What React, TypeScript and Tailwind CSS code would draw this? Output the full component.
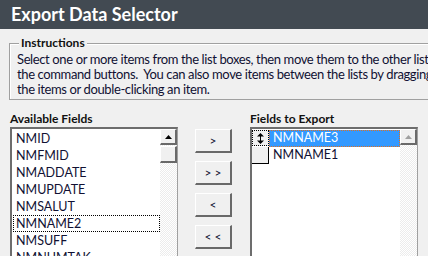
import React from "react";

const leftItems = ["NMID", "NMFMID", "NMADDATE", "NMUPDATE", "NMSALUT", "NMNAME2", "NMSUFF", "NMNUMTAK"];

const ui = { fontFamily: "Lato, 'Liberation Sans', sans-serif" };
const checker = "bg-[repeating-conic-gradient(#ffffff_0_25%,#ececec_0_50%)] bg-[length:2px_2px]";

const Arrow = ({ disabled }: { disabled?: boolean }) => (
  <svg width="7" height="4" viewBox="0 0 7 4">
    <path d="M3.5 0 L7 4 L0 4 Z" fill={disabled ? "#a0a0a0" : "#000"} />
  </svg>
);

const Raised = ({ className = "", children }: { className?: string; children?: React.ReactNode }) => (
  <div className={`flex items-center justify-center bg-[#f0f0f0] border-t border-l border-t-white border-l-white border-r-2 border-b-2 border-r-[#696969] border-b-[#696969] ${className}`}>
    {children}
  </div>
);

const MoveButton = ({ label }: { label: string }) => (
  <Raised className="w-[37px] h-[24px] text-[12px] text-[#111133]">
    <span style={ui}>{label}</span>
  </Raised>
);

export default function App() {
  return (
    <div className="w-[428px] h-[256px] overflow-hidden bg-[#f0f0f0] flex flex-col" style={ui}>
      <div className="h-[29px] shrink-0 bg-[#424a52] pl-[11px] text-white font-bold text-[18px] leading-[29px]">
        Export Data Selector
      </div>

      <div className="relative mt-[14px] ml-[9px] w-[440px] h-[57px] shrink-0 border border-[#a0a0a0] shadow-[inset_1px_1px_0_#fff]">
        <span className="absolute -top-[9px] left-[9px] px-[2px] bg-[#f0f0f0] font-bold text-[12px] leading-[16px] text-[#111]">
          Instructions
        </span>
        <div className="pt-[8px] pl-[7px] text-[13px] tracking-[-0.38px] leading-[15px] text-[#111133] whitespace-nowrap">
          <div>Select one or more items from the list boxes, then move them to the other list</div>
          <div>the command buttons.&nbsp; You can also move items between the lists by dragging</div>
          <div>the items or double-clicking an item.</div>
        </div>
      </div>

      <div className="flex mt-[11px] pl-[10px]">
        <div className="flex flex-col w-[168px]">
          <div className="font-bold text-[12px] leading-[15px] text-[#111] h-[16px]">Available Fields</div>
          <div className="flex h-[140px] bg-white border-t-2 border-l-2 border-[#6d6d6d] border-r border-r-[#a0a0a0]">
            <div className="flex-1 pt-[1px]">
              {leftItems.map((it) => (
                <div
                  key={it}
                  className={`h-[17px] pl-[2px] ml-[1px] text-[12.5px] leading-[15px] text-[#111133] border ${
                    it === "NMNAME2" ? "border-dotted border-black" : "border-transparent"
                  }`}
                >
                  {it}
                </div>
              ))}
            </div>
            <div className={`w-[17px] flex flex-col ${checker}`}>
              <Raised className="h-[16px]">
                <Arrow />
              </Raised>
              <Raised className="h-[17px] mt-[1px]" />
            </div>
          </div>
        </div>

        <div className="flex flex-col gap-[8px] ml-[17px] mt-[18px]">
          <MoveButton label=">" />
          <MoveButton label="> >" />
          <MoveButton label="<" />
          <MoveButton label="< <" />
        </div>

        <div className="flex flex-col w-[168px] ml-[18px]">
          <div className="font-bold text-[12px] leading-[15px] text-[#111] h-[16px]">Fields to Export</div>
          <div className="flex h-[140px] bg-white border-t-2 border-l-2 border-[#6d6d6d] border-r border-r-[#a0a0a0]">
            <div className="flex-1 pt-[1px]">
              <div className="flex h-[17px]">
                <div className="w-[17px] h-[16px] flex items-center justify-center bg-[#f0f0f0] border border-dotted border-black">
                  <svg width="7" height="11" viewBox="0 0 7 11">
                    <path d="M3.5 0 L7 3.5 L0 3.5 Z M3.5 11 L7 7.5 L0 7.5 Z" fill="#000" />
                    <rect x="3" y="3" width="1" height="5" fill="#000" />
                  </svg>
                </div>
                <div className="flex-1 bg-[#3399ff] border border-dotted border-[#e07020] text-white text-[12.5px] leading-[14px] pl-[3px]">
                  NMNAME3
                </div>
              </div>
              <div className="flex h-[17px]">
                <div className="w-[17px] h-[17px] bg-[#f0f0f0] border-r border-b border-black" />
                <div className="flex-1 text-[12.5px] leading-[15px] pl-[4px] text-[#111133]">NMNAME1</div>
              </div>
            </div>
            <div className={`w-[17px] flex flex-col ${checker}`}>
              <Raised className="h-[16px]">
                <Arrow disabled />
              </Raised>
            </div>
          </div>
        </div>
      </div>
    </div>
  );
}
